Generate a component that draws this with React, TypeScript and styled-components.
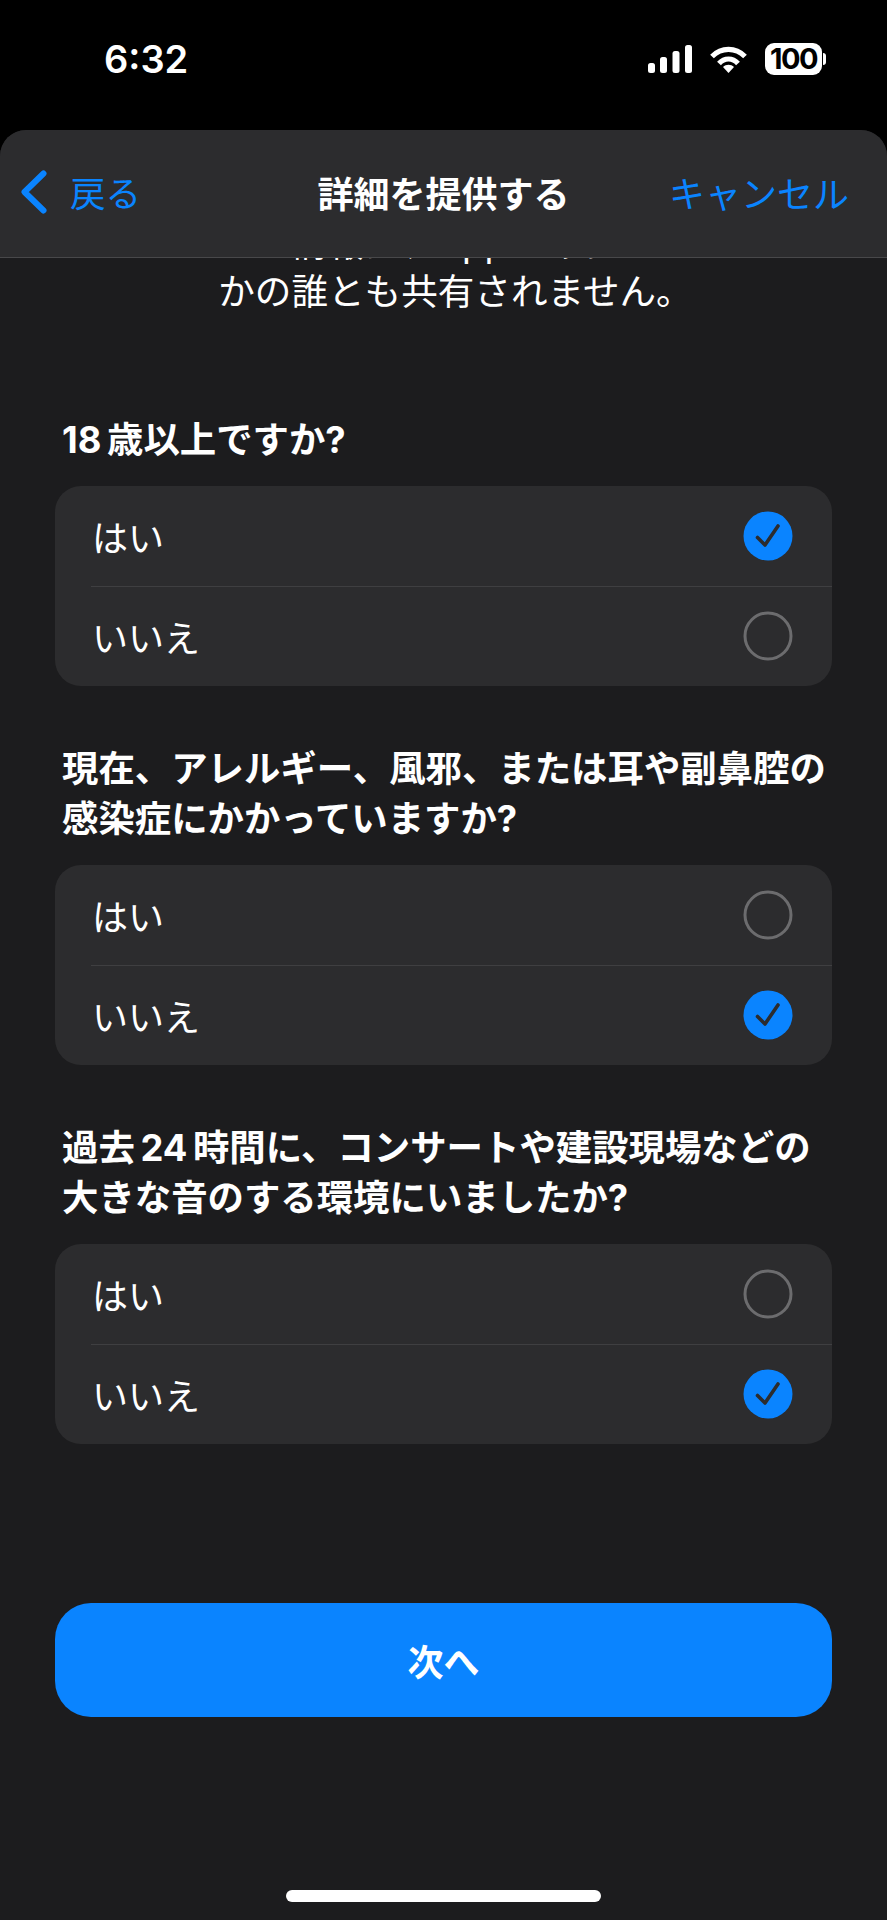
import styled, { createGlobalStyle } from "styled-components"

const GlobalStyle = createGlobalStyle`
  html, body {
    margin: 0;
    padding: 0;
    background: #000;
  }
  body {
    font-family: Inter, "Noto Sans CJK JP", sans-serif;
    -webkit-font-smoothing: antialiased;
  }
`

const Screen = styled.div`
  width: 887px;
  height: 1920px;
  display: flex;
  flex-direction: column;
  background: #000;
  overflow: hidden;
`

const StatusBar = styled.div`
  height: 130px;
  flex: none;
  display: flex;
  justify-content: space-between;
  align-items: flex-start;
  padding: 43px 65px 0 104px;
  box-sizing: border-box;
  color: #fff;
`

const Clock = styled.div`
  font-size: 38px;
  line-height: 32px;
  font-weight: 600;
`

const StatusIcons = styled.div`
  display: flex;
  align-items: center;
  gap: 18px;
  height: 32px;
`

const Battery = styled.div`
  position: relative;
  width: 57px;
  height: 32px;
  border-radius: 9px;
  background: #fff;
  color: #000;
  font-size: 29px;
  font-weight: 700;
  letter-spacing: -1.5px;
  line-height: 32px;
  text-align: center;

  &::after {
    content: "";
    position: absolute;
    left: 58px;
    top: 10px;
    width: 3px;
    height: 12px;
    border-radius: 0 3px 3px 0;
    background: #fff;
  }
`

const Sheet = styled.div`
  flex: 1;
  min-height: 0;
  display: flex;
  flex-direction: column;
  background: #1c1c1e;
  border-radius: 26px 26px 0 0;
  overflow: hidden;
`

const NavBar = styled.div`
  height: 128px;
  flex: none;
  box-sizing: border-box;
  display: grid;
  grid-template-columns: 1fr auto 1fr;
  align-items: center;
  padding: 0 38px 4px;
  background: #2c2c2e;
  border-bottom: 1px solid #48484a;
`

const NavBack = styled.div`
  display: flex;
  align-items: center;
  gap: 23px;
  margin-left: -17px;
  color: #0a84ff;
  font-size: 35.5px;
`

const NavTitle = styled.div`
  color: #fff;
  font-size: 36px;
  font-weight: 700;
`

const NavCancel = styled.div`
  justify-self: end;
  color: #0a84ff;
  font-size: 36px;
`

const Content = styled.div`
  flex: 1;
  min-height: 0;
  display: flex;
  flex-direction: column;
  padding: 0 55px;
  overflow: hidden;
  position: relative;
`

const Intro = styled.p`
  margin: -38px 0 0;
  padding-left: 24px;
  color: #fff;
  font-size: 36.6px;
  line-height: 48px;
  text-align: center;
`

const Question = styled.h2`
  margin: 0;
  padding: 0 0 0 7px;
  color: #fff;
  font-size: 36.4px;
  line-height: 50px;
  font-weight: 700;
  word-spacing: -3px;
  white-space: nowrap;
`

const Section = styled.section`
  display: flex;
  flex-direction: column;
  gap: 21px;
  margin-top: 58px;

  &:first-of-type {
    margin-top: 99px;
  }
`

const Card = styled.div`
  background: #2c2c2e;
  border-radius: 26px;
  overflow: hidden;
`

const Row = styled.div<{ $first?: boolean }>`
  height: 100px;
  box-sizing: border-box;
  display: flex;
  align-items: center;
  justify-content: space-between;
  padding: 0 39px 0 37px;
  color: #fff;
  font-size: 36px;
  position: relative;

  ${({ $first }) =>
    $first
      ? ""
      : `
    &::before {
      content: "";
      position: absolute;
      left: 36px;
      right: 0;
      top: 0;
      height: 1px;
      background: #3f3f41;
    }
  `}
`

const NextButton = styled.button`
  margin-top: 159px;
  height: 114px;
  flex: none;
  border: none;
  border-radius: 36px;
  background: #0a84ff;
  color: #fff;
  font: inherit;
  font-size: 36px;
  font-weight: 700;
`

const HomeIndicator = styled.div`
  position: absolute;
  left: 286px;
  bottom: 18px;
  width: 315px;
  height: 12px;
  border-radius: 6px;
  background: #fff;
`

const SignalIcon = () => (
  <svg width="44" height="28" viewBox="0 0 44 28" fill="#fff">
    <rect x="0" y="18" width="7" height="10" rx="2.5" />
    <rect x="12" y="12" width="7" height="16" rx="2.5" />
    <rect x="24.5" y="6" width="7" height="22" rx="2.5" />
    <rect x="37" y="0" width="7" height="28" rx="2.5" />
  </svg>
)

const WifiIcon = () => (
  <svg width="37" height="27" viewBox="0 0 37 27" fill="none" stroke="#fff" strokeWidth="5.2">
    <path d="M2 10.5C11.5 1 25.5 1 35 10.5" />
    <path d="M9 17.5C14.5 11.5 22.5 11.5 28 17.5" />
    <path d="M13 21L18.5 27L24 21C21 18 16 18 13 21Z" fill="#fff" stroke="none" />
  </svg>
)

const ChevronIcon = () => (
  <svg width="26" height="44" viewBox="0 0 26 44" fill="none" stroke="#0a84ff" strokeWidth="6" strokeLinecap="round" strokeLinejoin="round">
    <path d="M22.5 3.5L3.5 22L22.5 40.5" />
  </svg>
)

const RadioIcon = ({ checked }: { checked: boolean }) =>
  checked ? (
    <svg width="50" height="50" viewBox="0 0 50 50">
      <circle cx="25" cy="25" r="24.5" fill="#0a84ff" />
      <path d="M14.5 26.5L22 34L35 15" fill="none" stroke="#2c2c2e" strokeWidth="3.6" strokeLinecap="round" strokeLinejoin="round" />
    </svg>
  ) : (
    <svg width="50" height="50" viewBox="0 0 50 50">
      <circle cx="25" cy="25" r="23" fill="none" stroke="#6c6c6e" strokeWidth="3" />
    </svg>
  )

const questions = [
  { text: ["18 歳以上ですか?"], answer: 0 },
  { text: ["現在、アレルギー、風邪、または耳や副鼻腔の", "感染症にかかっていますか?"], answer: 1 },
  { text: ["過去 24 時間に、コンサートや建設現場などの", "大きな音のする環境にいましたか?"], answer: 1 },
]

const options = ["はい", "いいえ"]

export default function App() {
  return (
    <Screen>
      <GlobalStyle />
      <StatusBar>
        <Clock>6:32</Clock>
        <StatusIcons>
          <SignalIcon />
          <WifiIcon />
          <Battery>100</Battery>
        </StatusIcons>
      </StatusBar>
      <Sheet>
        <NavBar>
          <NavBack>
            <ChevronIcon />
            戻る
          </NavBack>
          <NavTitle>詳細を提供する</NavTitle>
          <NavCancel>キャンセル</NavCancel>
        </NavBar>
        <Content>
          <Intro>
            情報は、Apple やほ
            <br />
            かの誰とも共有されません。
          </Intro>
          {questions.map((q) => (
            <Section key={q.text[0]}>
              <Question>
                {q.text.map((line) => (
                  <div key={line}>{line}</div>
                ))}
              </Question>
              <Card>
                {options.map((label, i) => (
                  <Row key={label} $first={i === 0}>
                    {label}
                    <RadioIcon checked={q.answer === i} />
                  </Row>
                ))}
              </Card>
            </Section>
          ))}
          <NextButton>次へ</NextButton>
          <HomeIndicator />
        </Content>
      </Sheet>
    </Screen>
  )
}
